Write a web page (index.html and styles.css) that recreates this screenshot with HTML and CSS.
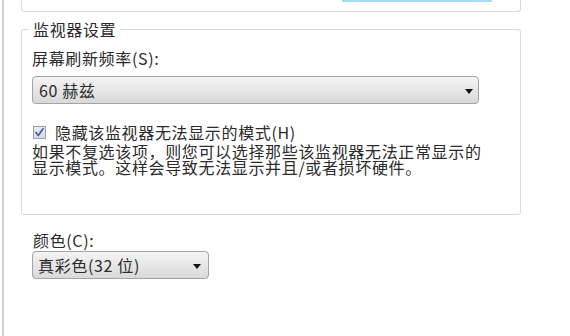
FILE: index.html
```html
<!DOCTYPE html>
<html lang="zh-CN">
<head>
<meta charset="utf-8">
<title>监视器设置</title>
<link rel="stylesheet" href="styles.css">
</head>
<body>
<div class="window">
  <div class="topcard"><div class="topbtn"></div></div>
  <fieldset class="group">
    <legend>监视器设置</legend>
    <div class="label">屏幕刷新频率(S):</div>
    <div class="select wide"><span>60 赫兹</span><span class="arrow"></span></div>
    <label class="check">
      <span class="box"><svg width="11" height="11" viewBox="0 0 11 11"><path d="M2 5.5 L4.3 8.5 L9 1.8" fill="none" stroke="#4a63b5" stroke-width="1.8" stroke-linecap="round" stroke-linejoin="round"/></svg></span>
      <span>隐藏该监视器无法显示的模式(H)</span>
    </label>
    <p class="note">如果不复选该项，则您可以选择那些该监视器无法正常显示的显示模式。这样会导致无法显示并且/或者损坏硬件。</p>
  </fieldset>
  <div class="label color-label">颜色(C):</div>
  <div class="select narrow"><span>真彩色(32 位)</span><span class="arrow"></span></div>
</div>
</body>
</html>
```

FILE: styles.css
```css
html, body {
  margin: 0;
  padding: 0;
  background: #ffffff;
}
body {
  font-family: "Noto Sans CJK SC", "Noto Sans", sans-serif;
  font-size: 16px;
  color: #2b2b2b;
  letter-spacing: 0.65px;
}
.window {
  margin-left: 2px;
  border-left: 2px solid #d2d2d2;
  height: 336px;
  box-sizing: border-box;
  padding-left: 17px;
  overflow: hidden;
}
.topcard {
  width: 500px;
  height: 12px;
  box-sizing: border-box;
  border: 1px solid #d9d9d9;
  border-top: none;
  border-radius: 0 0 3px 3px;
}
.topbtn {
  margin-left: 320px;
  width: 150px;
  height: 2px;
  background: #a9d9f1;
}
.group {
  margin: 8px 0 0;
  width: 500px;
  box-sizing: border-box;
  border: 1px solid #dadada;
  border-radius: 3px;
  padding: 0 10px 39px;
  min-inline-size: 0;
}
.group legend {
  padding: 0 4px;
  margin-left: -3px;
  line-height: 18px;
}
.label {
  margin-top: 11px;
  line-height: 18px;
}
.select {
  display: flex;
  align-items: center;
  justify-content: space-between;
  height: 28px;
  box-sizing: border-box;
  border: 1px solid #a3a3a3;
  border-radius: 4px;
  background: linear-gradient(#f4f4f4, #e6e6e6 50%, #d9d9d9);
  padding: 0 5px 0 5px;
  margin-top: 9px;
  line-height: 18px;
}
.wide {
  width: 447px;
  padding-left: 6px;
}
.arrow {
  width: 0;
  height: 0;
  border-top: 5px solid #111;
  border-left: 4.5px solid transparent;
  border-right: 4.5px solid transparent;
  margin-top: 2px;
}
.check {
  display: flex;
  align-items: center;
  margin-top: 20px;
  line-height: 16px;
  height: 16px;
}
.box {
  width: 13px;
  height: 13px;
  box-sizing: border-box;
  margin-left: 1px;
  margin-right: 9px;
  border: 1px solid #9aa0a8;
  background: linear-gradient(#e9ecf2, #d7dbe4);
  display: flex;
  align-items: center;
  justify-content: center;
}
.note {
  margin: 3px 0 0;
  line-height: 16px;
  width: 458px;
}
.color-label {
  margin-top: 16px;
  margin-left: 12px;
}
.narrow {
  width: 177px;
  margin-left: 11px;
  margin-top: 2px;
  padding-right: 7px;
}
```
